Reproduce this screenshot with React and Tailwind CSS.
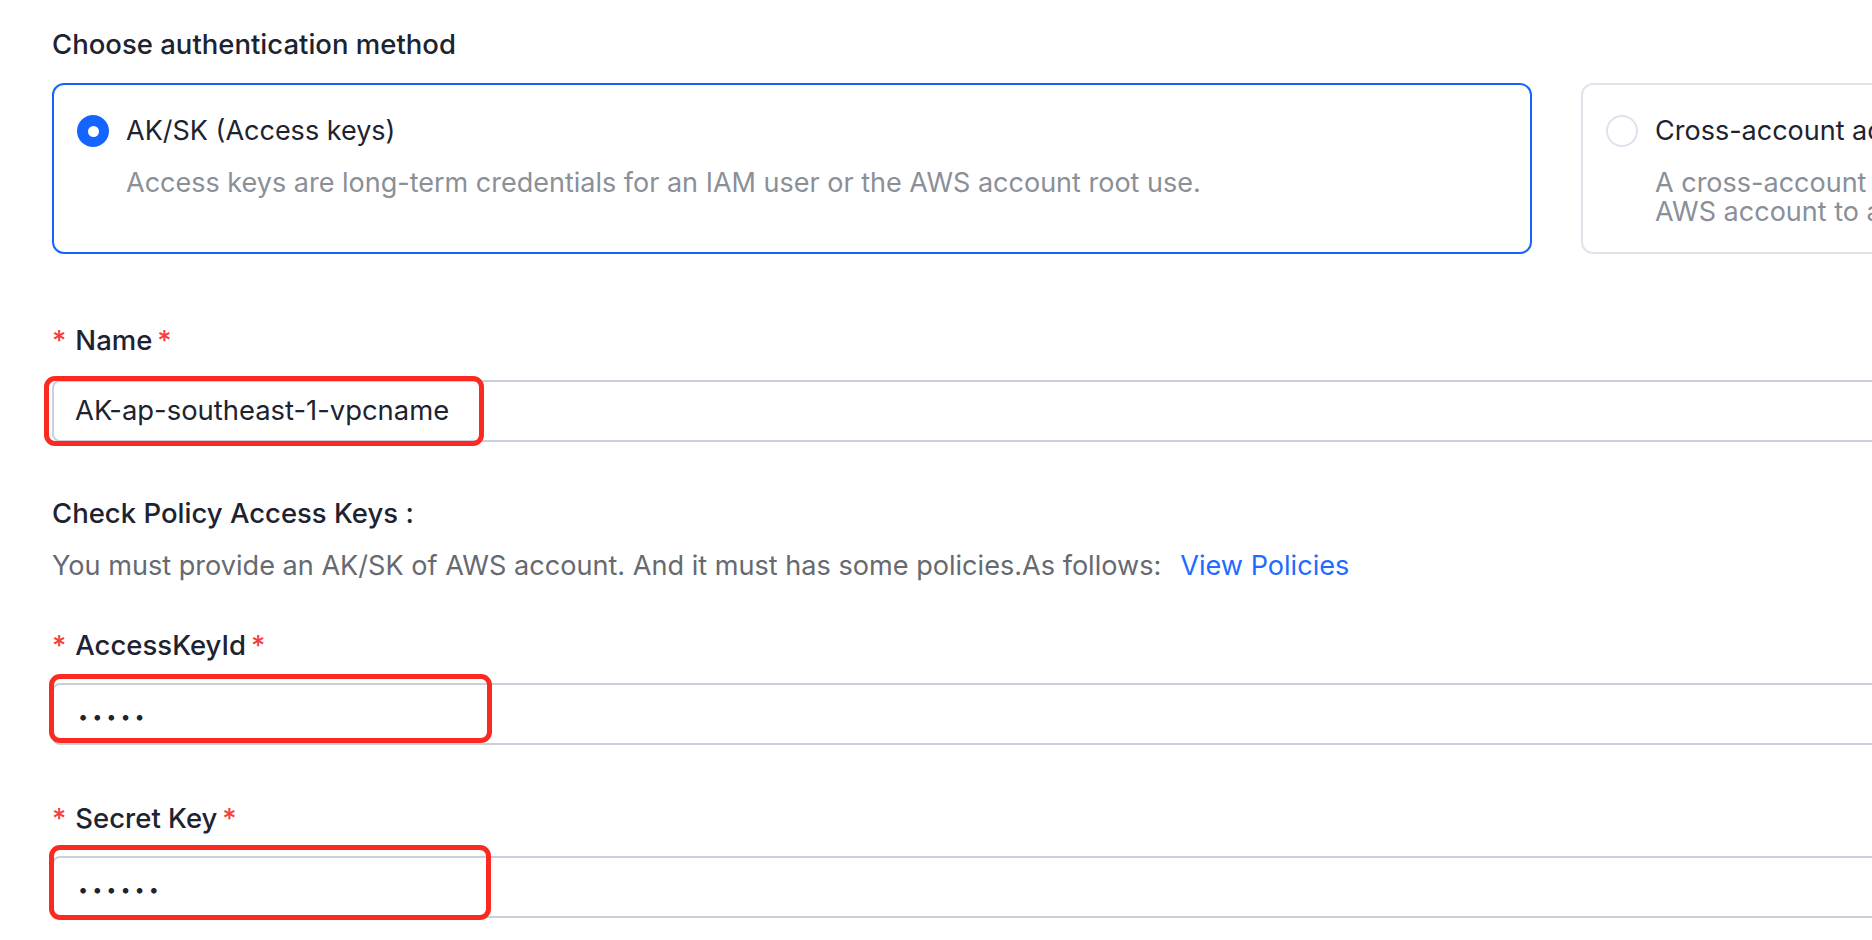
import React from "react";

function RedBox({ className }) {
  return (
    <div
      className={`pointer-events-none absolute rounded-[11px] border-[5px] border-[#fb2a20] ${className}`}
    />
  );
}

function Label({ text, className = "" }) {
  return (
    <div className={`flex h-[40px] items-center text-[27.5px] font-medium leading-[40px] text-[#1d2330] ${className}`}>
      <span className="mr-[9px] text-[#f53f3f]">*</span>
      <span>{text}</span>
      <span className="ml-[5px] text-[#f53f3f]">*</span>
    </div>
  );
}

function Radio({ checked }) {
  if (checked) {
    return (
      <div className="flex h-[32px] w-[32px] shrink-0 items-center justify-center rounded-full bg-[#1664ff]">
        <div className="h-[11px] w-[11px] rounded-full bg-white" />
      </div>
    );
  }
  return <div className="h-[32px] w-[32px] shrink-0 rounded-full border-2 border-[#dde2ee] bg-white" />;
}

function Card({ checked, title, children }) {
  return (
    <div
      className={`h-[171px] w-[1480px] shrink-0 rounded-[12px] border-2 bg-white pl-[23px] pr-[24px] pt-[30px] ${
        checked ? "border-[#1664ff]" : "border-[#e0e4ed]"
      }`}
    >
      <div className="flex h-[32px] items-center gap-[17px]">
        <Radio checked={checked} />
        <span className="text-[27px] leading-[32px] text-[#1d2330]">{title}</span>
      </div>
      <div className="ml-[49px] mt-[21px] text-[27px] leading-[29px] text-[#8a8f98]">{children}</div>
    </div>
  );
}

export default function App() {
  return (
    <div
      className="h-[940px] w-full overflow-hidden bg-white"
      style={{ fontFamily: "Inter, 'Noto Sans', 'Liberation Sans', sans-serif" }}
    >
      <div className="w-[3010px] pl-[52px] pt-[24px]">
        <div className="h-[40px] text-[27.5px] font-medium leading-[40px] text-[#1d2330]">
          Choose authentication method
        </div>

        <div className="mt-[19px] flex gap-[49px]">
          <Card checked title="AK/SK (Access keys)">
            Access keys are long-term credentials for an IAM user or the AWS account root use.
          </Card>
          <Card title="Cross-account access role (IAM role)">
            A cross-account role is an IAM role with a trust policy that allows IAM principals in another
            <br />
            AWS account to assume the role and access resources.
          </Card>
        </div>

        <Label text="Name" className="mt-[66px]" />
        <div className="relative mt-[20px]">
          <div className="flex h-[62px] w-full items-center rounded-[8px] border-2 border-[#c8d0dc] pl-[21px] text-[27.4px] text-[#1d2330]">
            AK-ap-southeast-1-vpcname
          </div>
          <RedBox className="-left-[8px] -top-[4px] h-[70px] w-[440px]" />
        </div>

        <div className="mt-[51px] h-[40px] text-[27.5px] font-medium leading-[40px] text-[#1d2330]">
          Check Policy Access Keys :
        </div>
        <div className="mt-[13px] flex h-[40px] items-center text-[27.1px] leading-[40px] text-[#666a70]">
          <span>You must provide an AK/SK of AWS account. And it must has some policies.As follows:</span>
          <span className="ml-[19px] text-[#1f6bff]">View Policies</span>
        </div>

        <Label text="AccessKeyId" className="mt-[39px]" />
        <div className="relative mt-[18px]">
          <div className="flex h-[62px] w-full items-center rounded-[8px] border-2 border-[#c8d0dc] pl-[24px] pt-[4px] text-[18px] tracking-[4px] text-[#1d2330]">
            •••••
          </div>
          <RedBox className="-left-[3px] -top-[9px] h-[69px] w-[443px]" />
        </div>

        <Label text="Secret Key" className="mt-[53px]" />
        <div className="relative mt-[18px]">
          <div className="flex h-[62px] w-full items-center rounded-[8px] border-2 border-[#c8d0dc] pl-[24px] pt-[4px] text-[18px] tracking-[4px] text-[#1d2330]">
            ••••••
          </div>
          <RedBox className="-left-[3px] -top-[11px] h-[75px] w-[442px]" />
        </div>
      </div>
    </div>
  );
}
